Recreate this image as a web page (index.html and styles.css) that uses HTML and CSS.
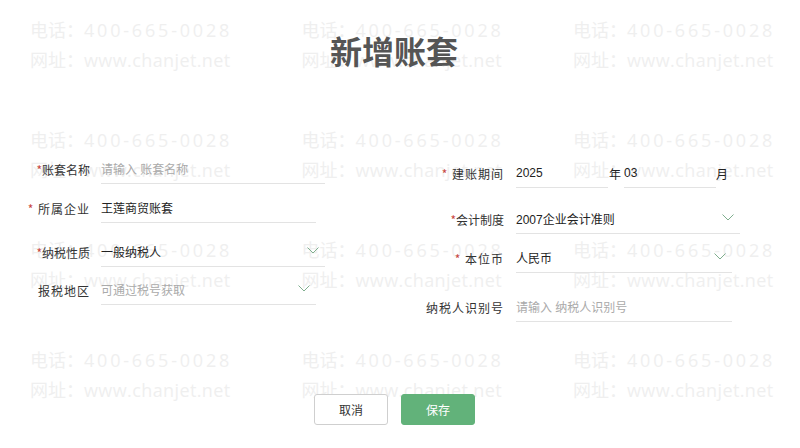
FILE: index.html
```html
<!DOCTYPE html>
<html lang="zh-CN">
<head>
<meta charset="utf-8">
<title>新增账套</title>
<link rel="stylesheet" href="styles.css">
</head>
<body>
<div class="wm" aria-hidden="true">
  <div class="wm-item"><div>电话：<span class="num">400-665-0028</span></div><div>网址：<span class="url">www.chanjet.net</span></div></div>
  <div class="wm-item"><div>电话：<span class="num">400-665-0028</span></div><div>网址：<span class="url">www.chanjet.net</span></div></div>
  <div class="wm-item"><div>电话：<span class="num">400-665-0028</span></div><div>网址：<span class="url">www.chanjet.net</span></div></div>
  <div class="wm-item"><div>电话：<span class="num">400-665-0028</span></div><div>网址：<span class="url">www.chanjet.net</span></div></div>
  <div class="wm-item"><div>电话：<span class="num">400-665-0028</span></div><div>网址：<span class="url">www.chanjet.net</span></div></div>
  <div class="wm-item"><div>电话：<span class="num">400-665-0028</span></div><div>网址：<span class="url">www.chanjet.net</span></div></div>
  <div class="wm-item"><div>电话：<span class="num">400-665-0028</span></div><div>网址：<span class="url">www.chanjet.net</span></div></div>
  <div class="wm-item"><div>电话：<span class="num">400-665-0028</span></div><div>网址：<span class="url">www.chanjet.net</span></div></div>
  <div class="wm-item"><div>电话：<span class="num">400-665-0028</span></div><div>网址：<span class="url">www.chanjet.net</span></div></div>
  <div class="wm-item"><div>电话：<span class="num">400-665-0028</span></div><div>网址：<span class="url">www.chanjet.net</span></div></div>
  <div class="wm-item"><div>电话：<span class="num">400-665-0028</span></div><div>网址：<span class="url">www.chanjet.net</span></div></div>
  <div class="wm-item"><div>电话：<span class="num">400-665-0028</span></div><div>网址：<span class="url">www.chanjet.net</span></div></div>
</div>

<div class="page">
  <h1 class="title">新增账套</h1>

  <div class="form">
    <div class="col col-left">
      <div class="row lr1">
        <div class="lbl"><span class="req">*</span>账套名称</div>
        <div class="field w224"><span class="ph">请输入 账套名称</span></div>
      </div>
      <div class="row lr2">
        <div class="lbl sp"><span class="req">*</span> 所属企业</div>
        <div class="field w215"><span class="val">王莲商贸账套</span></div>
      </div>
      <div class="row lr3">
        <div class="lbl"><span class="req">*</span>纳税性质</div>
        <div class="field w224 select"><span class="val">一般纳税人</span><svg class="chev" viewBox="0 0 12 7"><polyline points="0.5,0.5 6,6 11.5,0.5"/></svg></div>
      </div>
      <div class="row lr4">
        <div class="lbl sp">报税地区</div>
        <div class="field w215 select"><span class="ph">可通过税号获取</span><svg class="chev" viewBox="0 0 12 7"><polyline points="0.5,0.5 6,6 11.5,0.5"/></svg></div>
      </div>
    </div>

    <div class="col col-right">
      <div class="row rr1">
        <div class="lbl sp"><span class="req">*</span> 建账期间</div>
        <div class="period">
          <div class="field w92"><span class="val">2025</span></div>
          <span class="unit unit-y">年</span>
          <div class="field w92 month"><span class="val">03</span></div>
          <span class="unit">月</span>
        </div>
      </div>
      <div class="row rr2">
        <div class="lbl"><span class="req">*</span>会计制度</div>
        <div class="field w224 select"><span class="val">2007企业会计准则</span><svg class="chev" viewBox="0 0 12 7"><polyline points="0.5,0.5 6,6 11.5,0.5"/></svg></div>
      </div>
      <div class="row rr3">
        <div class="lbl sp"><span class="req">*</span> 本位币</div>
        <div class="field w216 select"><span class="val">人民币</span><svg class="chev" viewBox="0 0 12 7"><polyline points="0.5,0.5 6,6 11.5,0.5"/></svg></div>
      </div>
      <div class="row rr4">
        <div class="lbl sp">纳税人识别号</div>
        <div class="field w216"><span class="ph">请输入 纳税人识别号</span></div>
      </div>
    </div>
  </div>

  <div class="actions">
    <button class="btn btn-cancel" type="button">取消</button>
    <button class="btn btn-save" type="button">保存</button>
  </div>
</div>
</body>
</html>
```

FILE: styles.css
```css
* { box-sizing: border-box; }

html {
  background: #ffffff;
}

html, body {
  margin: 0;
  padding: 0;
}

body {
  width: 800px;
  height: 448px;
  overflow: hidden;
  font-family: "Liberation Sans", "Noto Sans CJK SC", sans-serif;
  color: #222;
}

/* watermark layer, drawn under the form */
.wm {
  position: absolute;
  left: 0;
  top: 0;
  width: 800px;
  height: 448px;
  overflow: hidden;
  z-index: -1;
  display: grid;
  grid-template-columns: 271.5px 271.5px 227px;
  grid-auto-rows: 110px;
  padding: 15px 0 0 30px;
  pointer-events: none;
  font-family: "Open Sans", "Noto Sans CJK SC", sans-serif;
  font-size: 18px;
  line-height: 30px;
  color: #efefef;
  white-space: nowrap;
}
.wm .num { letter-spacing: 2.8px; }
.wm .url { letter-spacing: 0.4px; }

.page {
  display: flex;
  flex-direction: column;
}

.title {
  margin: 30px 0 0;
  padding-right: 12px;
  text-align: center;
  font-family: "Noto Sans CJK SC", sans-serif;
  font-size: 32px;
  line-height: 40px;
  font-weight: 700;
  color: #555;
}

.form {
  display: flex;
  margin-top: 84px;
}

.col {
  display: flex;
  flex-direction: column;
}
.col-left { width: 400px; }

.row {
  display: flex;
  align-items: center;
  height: 30px;
}

.col-left .lbl { width: 90px; margin-right: 11px; }
.col-right .lbl { width: 104px; margin-right: 12px; }

.lbl {
  text-align: right;
  font-family: "Noto Sans CJK SC", sans-serif;
  font-size: 12px;
  color: #333;
  white-space: pre;
}
.lbl.sp { letter-spacing: 1px; }

.req {
  color: #c9473f;
  font-size: 12px;
}

.lr2 { margin-top: 9px; }
.lr3 { margin-top: 14px; }
.lr4 { margin-top: 8px; }

.rr1 { margin-top: 4px; }
.rr2 { margin-top: 16px; }
.rr3 { margin-top: 9px; }
.rr4 { margin-top: 19px; }

.field {
  display: flex;
  align-items: center;
  justify-content: space-between;
  height: 30px;
  border-bottom: 1px solid #e3e3e3;
  font-size: 12px;
  font-family: "Liberation Sans", "Noto Sans CJK SC", sans-serif;
}
.w224 { width: 224px; }
.w215 { width: 215px; }
.w216 { width: 216px; }
.w92 { width: 92px; }

.val { color: #222; }
.ph { color: #aaaaaa; }

.select { padding-right: 6px; }

.chev {
  width: 12px;
  height: 7px;
  margin-top: -3px;
  fill: none;
  stroke: #7fae8e;
  stroke-width: 1;
}

.period {
  display: flex;
  align-items: center;
}
.unit {
  font-family: "Noto Sans CJK SC", sans-serif;
  font-size: 12px;
  color: #222;
  width: 12px;
}
.unit-y { margin-left: 1px; margin-right: 3px; }

.actions {
  display: flex;
  gap: 13px;
  margin-top: 72px;
  padding-left: 314px;
}

.btn {
  width: 74px;
  height: 31px;
  border-radius: 3px;
  font-family: "Noto Sans CJK SC", sans-serif;
  font-size: 12px;
  cursor: pointer;
}
.btn-cancel {
  background: #fff;
  border: 1px solid #cfcfcf;
  color: #333;
}
.btn-save {
  background: #62b27a;
  border: 1px solid #62b27a;
  color: #fff;
}
```
